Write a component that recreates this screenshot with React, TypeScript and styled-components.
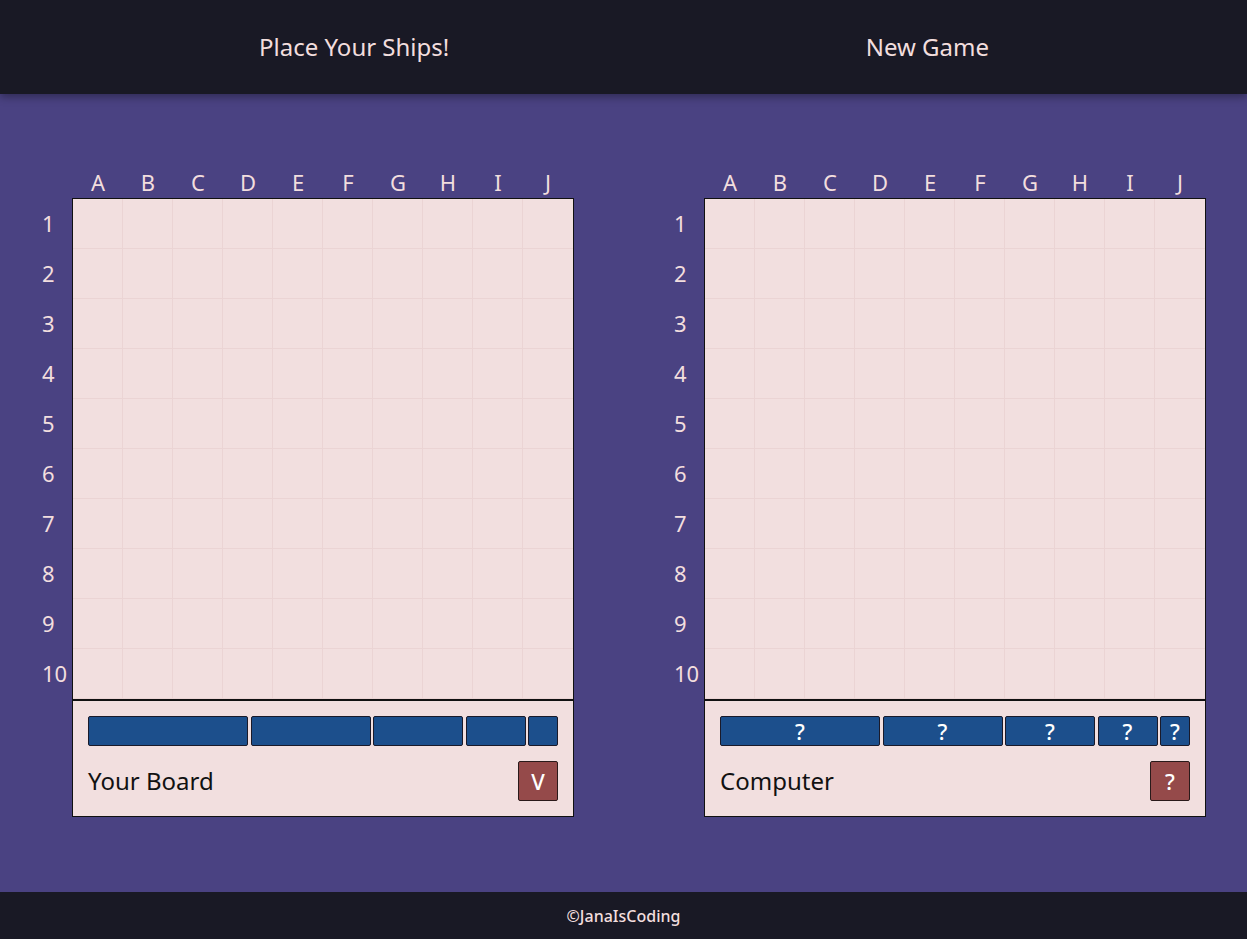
import styled, { createGlobalStyle } from "styled-components";

const colors = {
  night: "#191925",
  purple: "#4a4282",
  blush: "#f2dede",
  cell: "#f2dfdf",
  line: "#ebd4d4",
  ink: "#111111",
  ship: "#1c4f8c",
  danger: "#954a4a",
};

const GlobalCSS = createGlobalStyle`
  html, body {
    margin: 0;
    padding: 0;
  }
  body {
    font-family: "Noto Sans", "DejaVu Sans", sans-serif;
    background: ${colors.purple};
  }
`;

const Page = styled.div`
  display: flex;
  flex-direction: column;
  height: 100vh;
  width: 100vw;
  overflow: hidden;
`;

const Header = styled.header`
  height: 94px;
  flex-shrink: 0;
  display: flex;
  align-items: center;
  justify-content: space-between;
  padding: 0 258px 2px 259px;
  box-sizing: border-box;
  background: ${colors.night};
  box-shadow: 0 3px 8px rgba(0, 0, 0, 0.35);
  position: relative;
  z-index: 1;
`;

const HeaderLink = styled.span`
  color: ${colors.blush};
  font-size: 24px;
  cursor: pointer;
`;

const Main = styled.main`
  flex: 1;
  display: flex;
  align-items: center;
  gap: 98px;
  padding-left: 40px;
`;

const BoardBlock = styled.section`
  display: grid;
  grid-template-columns: 32px 502px;
  grid-template-rows: 28px auto auto;
`;

const ColLabels = styled.div`
  grid-column: 2;
  display: flex;
  padding-left: 1px;
`;

const RowLabels = styled.div`
  grid-column: 1;
  display: flex;
  flex-direction: column;
`;

const Label = styled.div<{ $row?: boolean }>`
  width: ${({ $row }) => ($row ? "32px" : "50px")};
  height: ${({ $row }) => ($row ? "50px" : "28px")};
  padding: ${({ $row }) => ($row ? "0 0 0 2px" : "0 0 4px")};
  box-sizing: border-box;
  display: flex;
  align-items: center;
  justify-content: ${({ $row }) => ($row ? "flex-start" : "center")};
  color: ${colors.blush};
  font-size: 22px;
  line-height: 1;
`;

const Grid = styled.div`
  display: grid;
  grid-template-columns: repeat(10, 50px);
  grid-template-rows: repeat(10, 50px);
  border: 1px solid ${colors.ink};
  border-bottom: none;
  background: ${colors.cell};
`;

const Cell = styled.div`
  box-sizing: border-box;
  border-right: 1px solid ${colors.line};
  border-bottom: 1px solid ${colors.line};

  &:nth-child(10n) {
    border-right: none;
  }
`;

const Panel = styled.div`
  grid-column: 2;
  display: flex;
  flex-direction: column;
  gap: 15px;
  padding: 15px;
  background: ${colors.cell};
  border: 1px solid ${colors.ink};
  border-top: 2px solid ${colors.ink};
`;

const Fleet = styled.div`
  display: flex;
  justify-content: space-between;
`;

const Ship = styled.div<{ $width: number }>`
  box-sizing: border-box;
  width: ${({ $width }) => $width}px;
  height: 30px;
  background: ${colors.ship};
  border: 1px solid #1a1a2a;
  border-radius: 2px;
  display: flex;
  align-items: center;
  justify-content: center;
  color: #ffffff;
  font-size: 22px;
  font-weight: 500;
  line-height: 1;
`;

const PanelFooter = styled.div`
  display: flex;
  align-items: center;
  justify-content: space-between;
`;

const BoardTitle = styled.span`
  color: ${colors.ink};
  font-size: 24px;
`;

const ToggleButton = styled.button`
  box-sizing: border-box;
  width: 40px;
  height: 40px;
  padding: 0;
  background: ${colors.danger};
  border: 1px solid #2a1a1a;
  border-radius: 2px;
  color: #ffffff;
  font-family: inherit;
  font-size: 22px;
  font-weight: 500;
  cursor: pointer;
`;

const Footer = styled.footer`
  height: 47px;
  flex-shrink: 0;
  display: flex;
  align-items: center;
  justify-content: center;
  background: ${colors.night};
  color: ${colors.blush};
  font-size: 16px;
  font-weight: 500;
`;

const letters = ["A", "B", "C", "D", "E", "F", "G", "H", "I", "J"];
const shipWidths = [160, 120, 90, 60, 30];

type BoardProps = {
  title: string;
  hidden?: boolean;
  toggle: string;
};

const Board = ({ title, hidden, toggle }: BoardProps) => (
  <BoardBlock>
    <div />
    <ColLabels>
      {letters.map((l) => (
        <Label key={l}>{l}</Label>
      ))}
    </ColLabels>
    <RowLabels>
      {letters.map((_, i) => (
        <Label key={i} $row>
          {i + 1}
        </Label>
      ))}
    </RowLabels>
    <Grid>
      {Array.from({ length: 100 }, (_, i) => (
        <Cell key={i} />
      ))}
    </Grid>
    <Panel>
      <Fleet>
        {shipWidths.map((w) => (
          <Ship key={w} $width={w}>
            {hidden ? "?" : ""}
          </Ship>
        ))}
      </Fleet>
      <PanelFooter>
        <BoardTitle>{title}</BoardTitle>
        <ToggleButton>{toggle}</ToggleButton>
      </PanelFooter>
    </Panel>
  </BoardBlock>
);

export default function App() {
  return (
    <>
      <GlobalCSS />
      <Page>
        <Header>
          <HeaderLink>Place Your Ships!</HeaderLink>
          <HeaderLink>New Game</HeaderLink>
        </Header>
        <Main>
          <Board title="Your Board" toggle="V" />
          <Board title="Computer" toggle="?" hidden />
        </Main>
        <Footer>©JanaIsCoding</Footer>
      </Page>
    </>
  );
}
